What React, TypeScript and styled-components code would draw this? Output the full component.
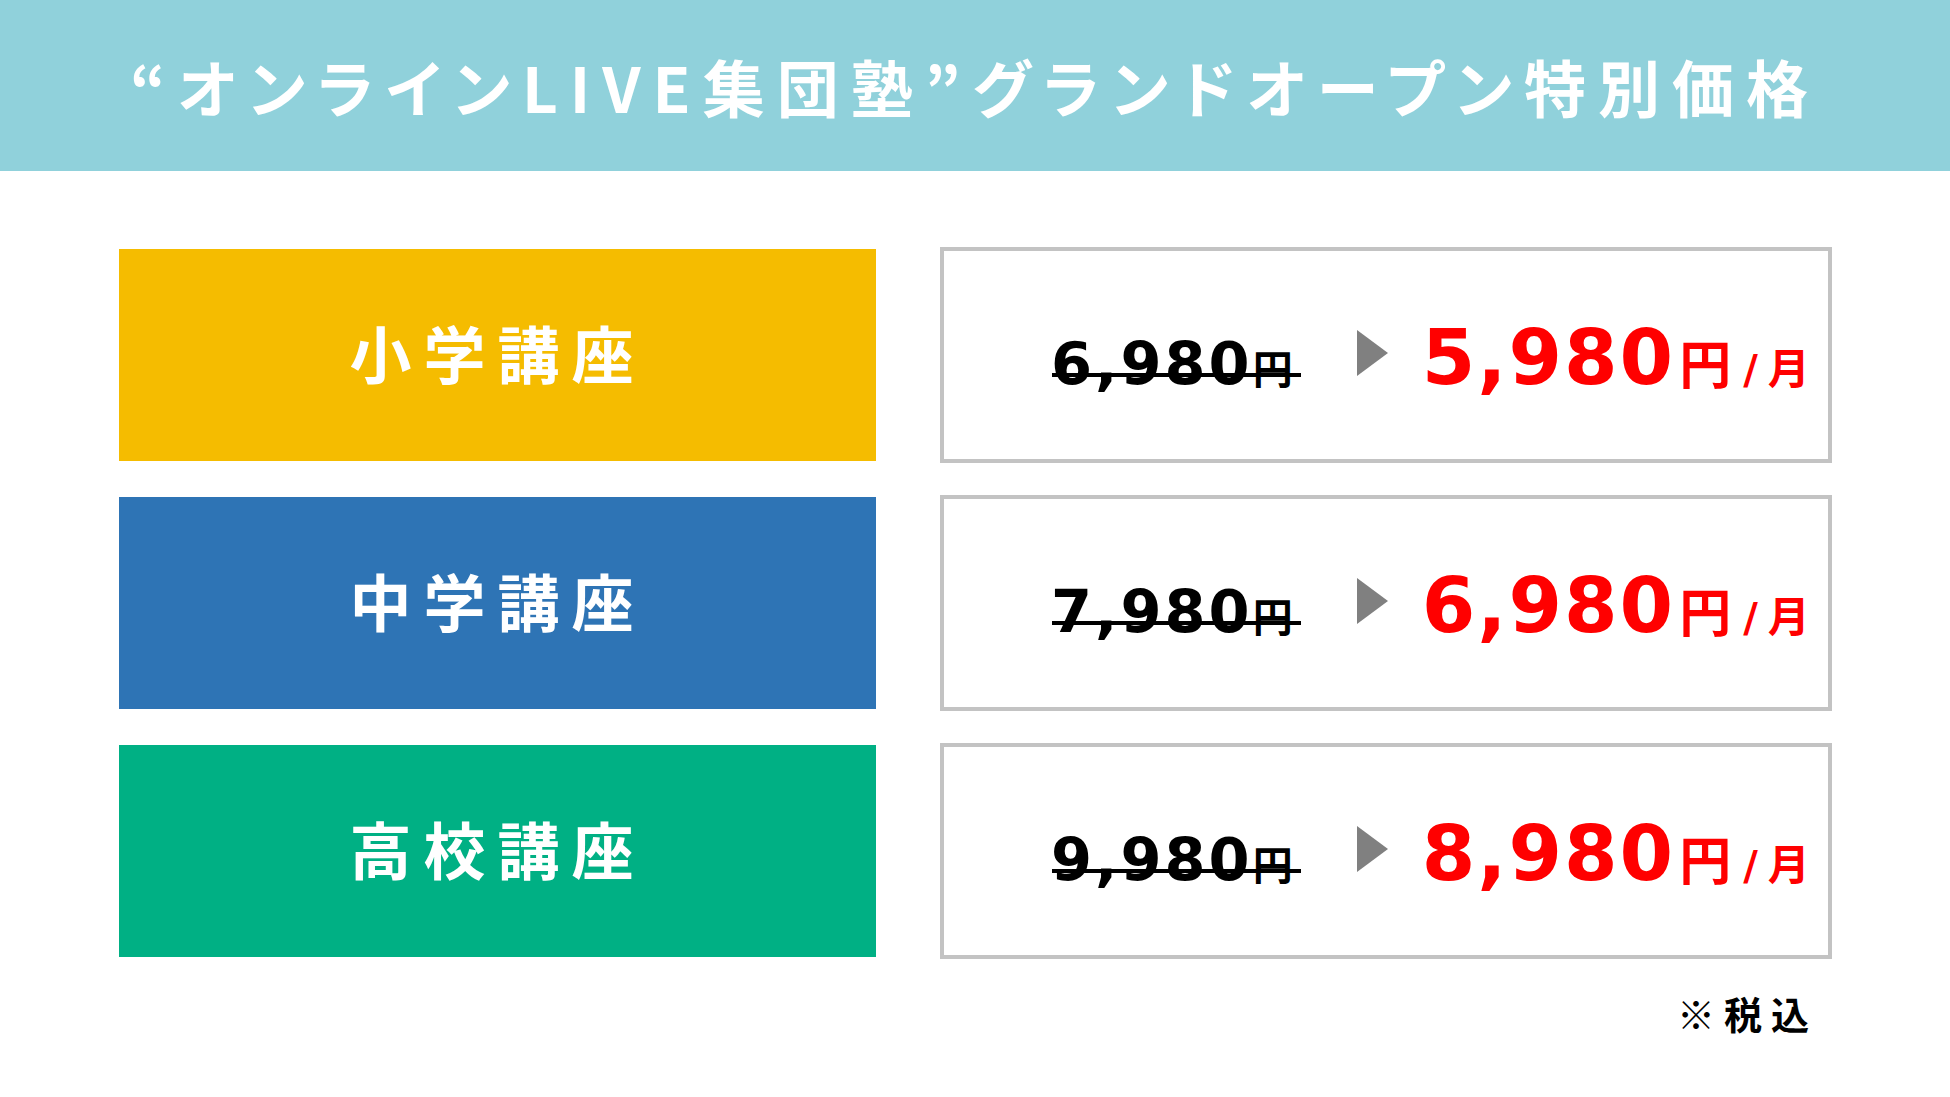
import React from 'react';
import styled, { createGlobalStyle } from 'styled-components';

const GlobalStyle = createGlobalStyle`
  html, body {
    margin: 0;
    padding: 0;
    background: #ffffff;
  }
  body {
    font-family: "Noto Sans CJK JP", "Noto Sans", sans-serif;
  }
`;

interface Course {
    name: string;
    color: string;
    oldPrice: string;
    newPrice: string;
}

const courses: Course[] = [
    { name: '小学講座', color: '#f5bc00', oldPrice: '6,980', newPrice: '5,980' },
    { name: '中学講座', color: '#2e74b5', oldPrice: '7,980', newPrice: '6,980' },
    { name: '高校講座', color: '#00b084', oldPrice: '9,980', newPrice: '8,980' },
];

const Page = styled.div`
  width: 1950px;
  min-height: 1097px;
  background: #ffffff;
`;

const Header = styled.header`
  height: 171px;
  background: #90d1db;
  display: flex;
  align-items: center;
  justify-content: center;
`;

const Title = styled.h1`
  margin: 0;
  color: #ffffff;
  font-family: "Noto Sans CJK JP", sans-serif;
  font-weight: 700;
  font-size: 62px;
  line-height: 1;
  letter-spacing: 12px;
  font-feature-settings: "palt";
  white-space: nowrap;
`;

const Main = styled.main`
  padding: 76px 0 0 119px;
  width: 1713px;
`;

const Rows = styled.div`
  display: flex;
  flex-direction: column;
  gap: 32px;
`;

const Row = styled.div`
  display: flex;
  align-items: center;
  gap: 64px;
`;

const Label = styled.div<{ $bg: string }>`
  box-sizing: border-box;
  width: 757px;
  height: 212px;
  padding-bottom: 6px;
  background: ${props => props.$bg};
  display: flex;
  align-items: center;
  justify-content: center;
  color: #ffffff;
  font-family: "Noto Sans CJK JP", sans-serif;
  font-weight: 700;
  font-size: 62px;
  line-height: 1;
  letter-spacing: 12px;
`;

const PriceBox = styled.div`
  box-sizing: border-box;
  width: 892px;
  height: 216px;
  border: 4px solid #c3c3c3;
  display: flex;
  align-items: baseline;
  padding: 68px 0 0 107px;
`;

const OldPrice = styled.span`
  position: relative;
  display: inline-flex;
  align-items: baseline;
  color: #000000;

  &::after {
    content: '';
    position: absolute;
    left: 1px;
    right: -8px;
    bottom: 16px;
    height: 4px;
    background: #000000;
  }
`;

const OldDigits = styled.span`
  font-family: "DejaVu Sans", sans-serif;
  font-weight: 700;
  font-size: 59px;
  line-height: 1;
  letter-spacing: 3px;
`;

const Yen = styled.span<{ $size: number }>`
  font-family: "Noto Sans CJK JP", sans-serif;
  font-weight: 700;
  font-size: ${props => props.$size}px;
  line-height: 1;
`;

const Arrow = styled.svg`
  flex: none;
  margin-left: 64px;
  margin-right: 34px;
`;

const NewPrice = styled.span`
  display: inline-flex;
  align-items: baseline;
  color: #ff0000;
`;

const NewDigits = styled.span`
  font-family: "DejaVu Sans", sans-serif;
  font-weight: 700;
  font-size: 77px;
  line-height: 1;
  letter-spacing: 2px;
  margin-right: 4px;
`;

const Slash = styled.span`
  font-family: "DejaVu Sans", sans-serif;
  font-weight: 700;
  font-size: 40px;
  line-height: 1;
  margin: 0 10px 0 12px;
`;

const Month = styled.span`
  font-family: "Noto Sans CJK JP", sans-serif;
  font-weight: 700;
  font-size: 42px;
  line-height: 1;
`;

const Note = styled.div`
  margin-top: 35px;
  padding-right: 14px;
  text-align: right;
  font-family: "Noto Sans CJK JP", sans-serif;
  font-weight: 700;
  font-size: 38px;
  line-height: 1;
  letter-spacing: 9px;
  color: #000000;
`;

const App: React.FC = () => {
    return (
        <Page>
            <GlobalStyle />
            <Header>
                <Title>“オンラインLIVE集団塾”グランドオープン特別価格</Title>
            </Header>
            <Main>
                <Rows>
                    {courses.map(course => (
                        <Row key={course.name}>
                            <Label $bg={course.color}>{course.name}</Label>
                            <PriceBox>
                                <OldPrice>
                                    <OldDigits>{course.oldPrice}</OldDigits>
                                    <Yen $size={40}>円</Yen>
                                </OldPrice>
                                <Arrow width="31" height="54" viewBox="0 0 31 54">
                                    <polygon points="0,0 31,23 0,46" fill="#808080" />
                                </Arrow>
                                <NewPrice>
                                    <NewDigits>{course.newPrice}</NewDigits>
                                    <Yen $size={52}>円</Yen>
                                    <Slash>/</Slash>
                                    <Month>月</Month>
                                </NewPrice>
                            </PriceBox>
                        </Row>
                    ))}
                </Rows>
                <Note>※税込</Note>
            </Main>
        </Page>
    );
};

export default App;
